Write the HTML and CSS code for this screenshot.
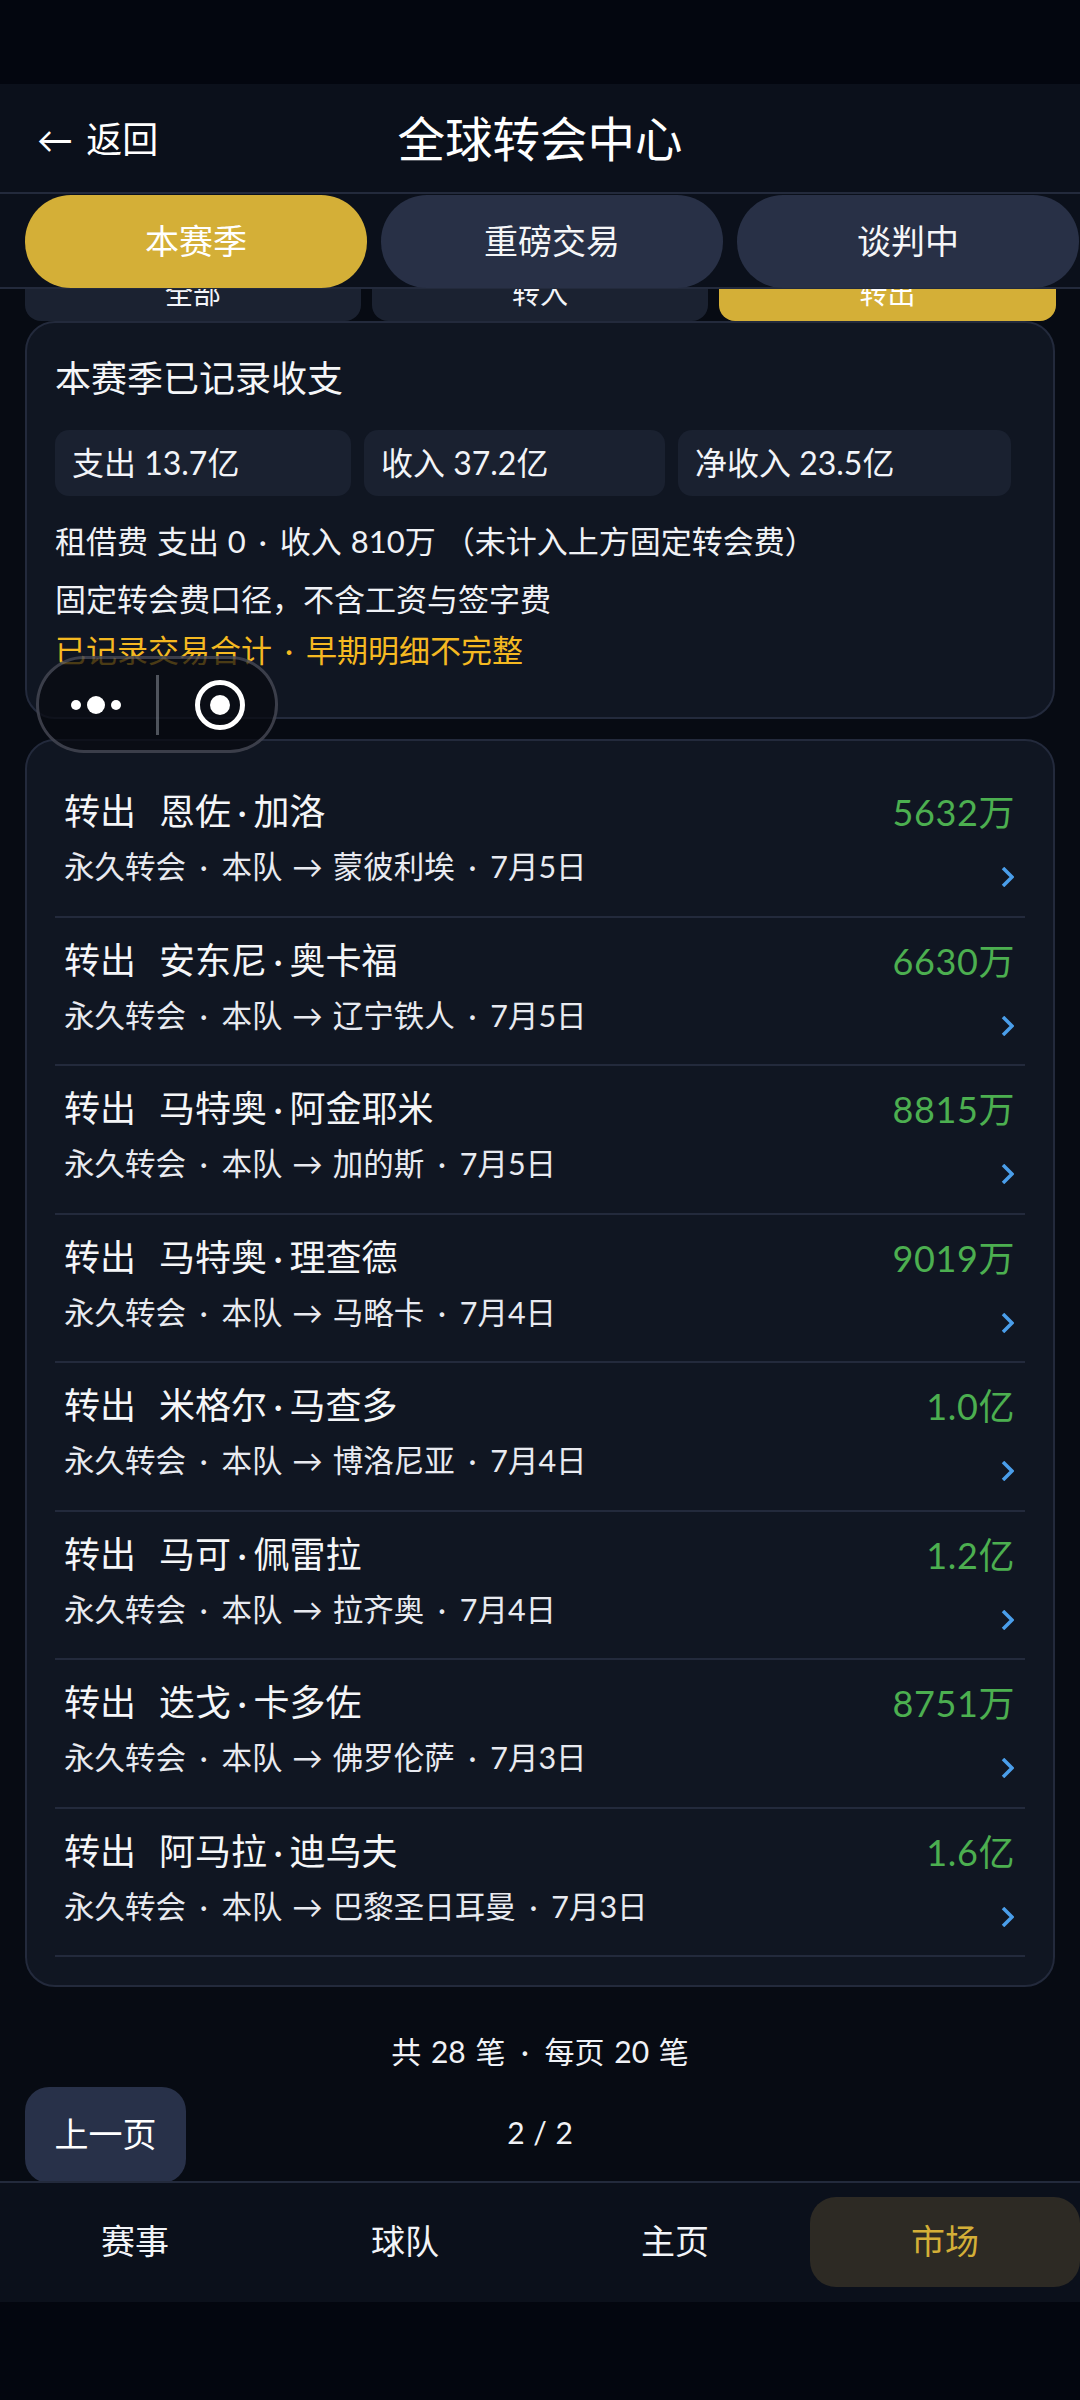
FILE: index.html
```html
<!DOCTYPE html>
<html lang="zh-CN">
<head>
<meta charset="utf-8">
<title>全球转会中心</title>
<link rel="stylesheet" href="styles.css">
</head>
<body>
<div class="app">
  <div class="status"></div>
  <header class="top">
    <div class="back">← 返回</div>
    <h1 class="title">全球转会中心</h1>
    <div></div>
  </header>
  <nav class="tabs">
    <div class="tab tab-on">本赛季</div>
    <div class="tab">重磅交易</div>
    <div class="tab">谈判中</div>
  </nav>
  <main class="main">
    <div class="subtabs">
      <div class="subtab">全部</div>
      <div class="subtab">转入</div>
      <div class="subtab subtab-on">转出</div>
    </div>
    <section class="card summary">
      <h2 class="sum-title">本赛季已记录收支</h2>
      <div class="stats">
        <div class="stat">支出 13.7亿</div>
        <div class="stat">收入 37.2亿</div>
        <div class="stat">净收入 23.5亿</div>
      </div>
      <p class="note note-a">租借费 支出 0 <span class="dot">·</span> 收入 810万<span class="paren">（未计入上方固定转会费）</span></p>
      <p class="note note-b">固定转会费口径，不含工资与签字费</p>
      <p class="note note-c">已记录交易合计 <span class="dot">·</span> 早期明细不完整</p>
    </section>
    <section class="card list">
      <div class="row">
        <div class="row-l"><div class="row-t"><span class="kind">转出</span>恩佐<span class="name-dot">·</span>加洛</div><div class="row-s">永久转会 <span class="dot">·</span> 本队 → 蒙彼利埃 <span class="dot">·</span> 7月5日</div></div>
        <div class="row-r"><div class="amt">5632万</div><svg class="chev" viewBox="0 0 13 20"><path d="M2 1 11 10 2 19"/></svg></div>
      </div>
      <div class="row">
        <div class="row-l"><div class="row-t"><span class="kind">转出</span>安东尼<span class="name-dot">·</span>奥卡福</div><div class="row-s">永久转会 <span class="dot">·</span> 本队 → 辽宁铁人 <span class="dot">·</span> 7月5日</div></div>
        <div class="row-r"><div class="amt">6630万</div><svg class="chev" viewBox="0 0 13 20"><path d="M2 1 11 10 2 19"/></svg></div>
      </div>
      <div class="row">
        <div class="row-l"><div class="row-t"><span class="kind">转出</span>马特奥<span class="name-dot">·</span>阿金耶米</div><div class="row-s">永久转会 <span class="dot">·</span> 本队 → 加的斯 <span class="dot">·</span> 7月5日</div></div>
        <div class="row-r"><div class="amt">8815万</div><svg class="chev" viewBox="0 0 13 20"><path d="M2 1 11 10 2 19"/></svg></div>
      </div>
      <div class="row">
        <div class="row-l"><div class="row-t"><span class="kind">转出</span>马特奥<span class="name-dot">·</span>理查德</div><div class="row-s">永久转会 <span class="dot">·</span> 本队 → 马略卡 <span class="dot">·</span> 7月4日</div></div>
        <div class="row-r"><div class="amt">9019万</div><svg class="chev" viewBox="0 0 13 20"><path d="M2 1 11 10 2 19"/></svg></div>
      </div>
      <div class="row">
        <div class="row-l"><div class="row-t"><span class="kind">转出</span>米格尔<span class="name-dot">·</span>马查多</div><div class="row-s">永久转会 <span class="dot">·</span> 本队 → 博洛尼亚 <span class="dot">·</span> 7月4日</div></div>
        <div class="row-r"><div class="amt">1.0亿</div><svg class="chev" viewBox="0 0 13 20"><path d="M2 1 11 10 2 19"/></svg></div>
      </div>
      <div class="row">
        <div class="row-l"><div class="row-t"><span class="kind">转出</span>马可<span class="name-dot">·</span>佩雷拉</div><div class="row-s">永久转会 <span class="dot">·</span> 本队 → 拉齐奥 <span class="dot">·</span> 7月4日</div></div>
        <div class="row-r"><div class="amt">1.2亿</div><svg class="chev" viewBox="0 0 13 20"><path d="M2 1 11 10 2 19"/></svg></div>
      </div>
      <div class="row">
        <div class="row-l"><div class="row-t"><span class="kind">转出</span>迭戈<span class="name-dot">·</span>卡多佐</div><div class="row-s">永久转会 <span class="dot">·</span> 本队 → 佛罗伦萨 <span class="dot">·</span> 7月3日</div></div>
        <div class="row-r"><div class="amt">8751万</div><svg class="chev" viewBox="0 0 13 20"><path d="M2 1 11 10 2 19"/></svg></div>
      </div>
      <div class="row">
        <div class="row-l"><div class="row-t"><span class="kind">转出</span>阿马拉<span class="name-dot">·</span>迪乌夫</div><div class="row-s">永久转会 <span class="dot">·</span> 本队 → 巴黎圣日耳曼 <span class="dot">·</span> 7月3日</div></div>
        <div class="row-r"><div class="amt">1.6亿</div><svg class="chev" viewBox="0 0 13 20"><path d="M2 1 11 10 2 19"/></svg></div>
      </div>
    </section>
    <div class="total">共 28 笔 <span class="dot">·</span> 每页 20 笔</div>
    <div class="pager">
      <div class="prev">上一页</div>
      <div class="page-no">2 / 2</div>
    </div>
  </main>
  <footer class="bottom">
    <div class="nav">赛事</div>
    <div class="nav">球队</div>
    <div class="nav">主页</div>
    <div class="nav nav-on">市场</div>
  </footer>
  <div class="gesture"></div>
  <div class="capsule">
    <svg class="cap-more" viewBox="0 0 52 20"><circle cx="5" cy="10" r="5"/><circle cx="25" cy="10" r="9"/><circle cx="45" cy="10" r="5"/></svg>
    <span class="cap-line"></span>
    <svg class="cap-target" viewBox="0 0 50 50"><circle class="ring" cx="25" cy="25" r="22.5"/><circle cx="25" cy="25" r="10"/></svg>
  </div>
</div>
</body>
</html>
```

FILE: styles.css
```css
* { box-sizing: border-box; }
html, body { margin: 0; padding: 0; }
body {
  background: #03060f;
  color: #f2f4f8;
  font-family: Lato, "Noto Sans CJK SC", sans-serif;
}
.app {
  position: relative;
  width: 1080px;
  height: 2400px;
  overflow: hidden;
  display: flex;
  flex-direction: column;
  background: #070b13;
}
.status { height: 84px; background: #03060f; flex: none; }
.top {
  flex: none;
  height: 110px;
  display: grid;
  grid-template-columns: 1fr auto 1fr;
  align-items: center;
  padding: 0 37px;
  background: #0b101b;
  border-bottom: 2px solid #232a3c;
  position: relative;
  z-index: 2;
}
.back { font-size: 36px; line-height: 50px; color: #fff; margin-top: 2px; word-spacing: 4px; }
.title { margin: 2px 0 0; font-size: 47.5px; font-weight: 400; line-height: 60px; color: #fff; }
.tabs {
  flex: none;
  height: 95px;
  display: flex;
  gap: 14px;
  padding: 1px 0 1px 25px;
  background: #0b101b;
  border-bottom: 2px solid #232a3c;
  position: relative;
  z-index: 2;
}
.tab {
  flex: none;
  width: 342px;
  height: 93px;
  padding-bottom: 5px;
  border-radius: 46px;
  background: #283046;
  display: flex;
  align-items: center;
  justify-content: center;
  font-size: 34px;
  color: #f5f6f8;
}
.tab-on { background: #d4af37; color: #fff; }
.main { flex: 1; min-height: 0; overflow: hidden; padding: 0 25px; }
.subtabs {
  display: grid;
  grid-template-columns: 336px 336px 337px;
  gap: 11px;
  margin: -26px 0 0;
  height: 58px;
}
.subtab {
  display: flex;
  align-items: center;
  justify-content: center;
  border-radius: 0 0 16px 16px;
  background: #1b2231;
  font-size: 28px;
  color: #f2f4f8;
}
.subtab-on { background: #d4af37; color: #fff; }
.card {
  background: #101622;
  border: 2px solid #232a3c;
  border-radius: 30px;
}
.summary { height: 398px; padding: 0 28px; margin-bottom: 20px; position: relative; }
.sum-title { margin: 0; padding-top: 30px; font-size: 36px; font-weight: 400; line-height: 50px; color: #f5f6f8; }
.stats {
  display: grid;
  grid-template-columns: 296px 301px 333px;
  gap: 13px;
  margin-top: 27px;
}
.stat {
  height: 66px;
  padding: 0 0 5px 17px;
  border-radius: 14px;
  background: #1a2130;
  display: flex;
  align-items: center;
  font-size: 32px;
  color: #f2f4f8;
}
.note { margin: 0; font-size: 31px; line-height: 40px; color: #f0f2f6; word-spacing: 1px; }
.note-a { margin-top: 25px; }
.note-b { margin-top: 18px; }
.note-c { margin-top: 11px; color: #f5b921; }
.dot { margin: 0 4px; }
.paren { margin-left: 8px; }
.name-dot { margin: 0 6.5px; }
.list { height: 1248px; padding: 28px 28px 0; }
.row {
  height: 148.5px;
  display: flex;
  justify-content: space-between;
  padding: 0 10px 0 9px;
  border-bottom: 2px solid #232a3c;
}
.row-t { padding-top: 17px; font-size: 36px; line-height: 50px; color: #f5f6f8; }
.kind { margin-right: 23px; }
.row-s { margin-top: 10px; font-size: 30.5px; line-height: 40px; color: #e8eaf0; word-spacing: 2px; }
.row-r { display: flex; flex-direction: column; align-items: flex-end; }
.amt { padding-top: 18px; font-size: 36px; line-height: 50px; color: #4caf50; letter-spacing: 0.6px; }
.chev { display: block; width: 13px; height: 20px; margin: 30px 1px 0 0; fill: none; stroke: #4a9eea; stroke-width: 3.5; }
.total { margin-top: 44px; text-align: center; font-size: 30px; line-height: 40px; color: #f0f2f6; word-spacing: 2px; }
.total .dot { margin: 0 6px; }
.pager { display: grid; grid-template-columns: 161px 1fr 161px; align-items: center; margin-top: 16px; }
.prev {
  height: 96px;
  padding-bottom: 5px;
  border-radius: 24px;
  background: #283149;
  display: flex;
  align-items: center;
  justify-content: center;
  font-size: 34px;
  color: #fff;
}
.page-no { text-align: center; font-size: 30px; padding-bottom: 6px; color: #f0f2f6; word-spacing: 1px; }
.bottom {
  flex: none;
  height: 121px;
  display: grid;
  grid-template-columns: repeat(4, 270px);
  padding-top: 14px;
  background: #0b101b;
  border-top: 2px solid #232a3c;
  position: relative;
  z-index: 2;
}
.nav {
  height: 90px;
  padding-bottom: 5px;
  border-radius: 26px;
  display: flex;
  align-items: center;
  justify-content: center;
  font-size: 34px;
  color: #f2f4f8;
}
.nav-on { background: #2d2a24; color: #d4af37; }
.gesture { flex: none; height: 98px; background: #03060f; }
.capsule {
  position: absolute;
  left: 36px;
  top: 656px;
  width: 242px;
  height: 97px;
  border: 3px solid rgba(120, 125, 140, 0.45);
  border-radius: 48px;
  background: rgba(8, 10, 16, 0.72);
  z-index: 3;
  display: flex;
  align-items: center;
}
.cap-more { width: 52px; height: 20px; margin-left: 32px; fill: #fff; flex: none; }
.cap-line { width: 3px; height: 60px; margin-left: 33px; background: rgba(150, 155, 165, 0.5); flex: none; }
.cap-target { width: 50px; height: 50px; margin-left: 36px; fill: #fff; flex: none; }
.cap-target .ring { fill: none; stroke: #fff; stroke-width: 5; }
```
